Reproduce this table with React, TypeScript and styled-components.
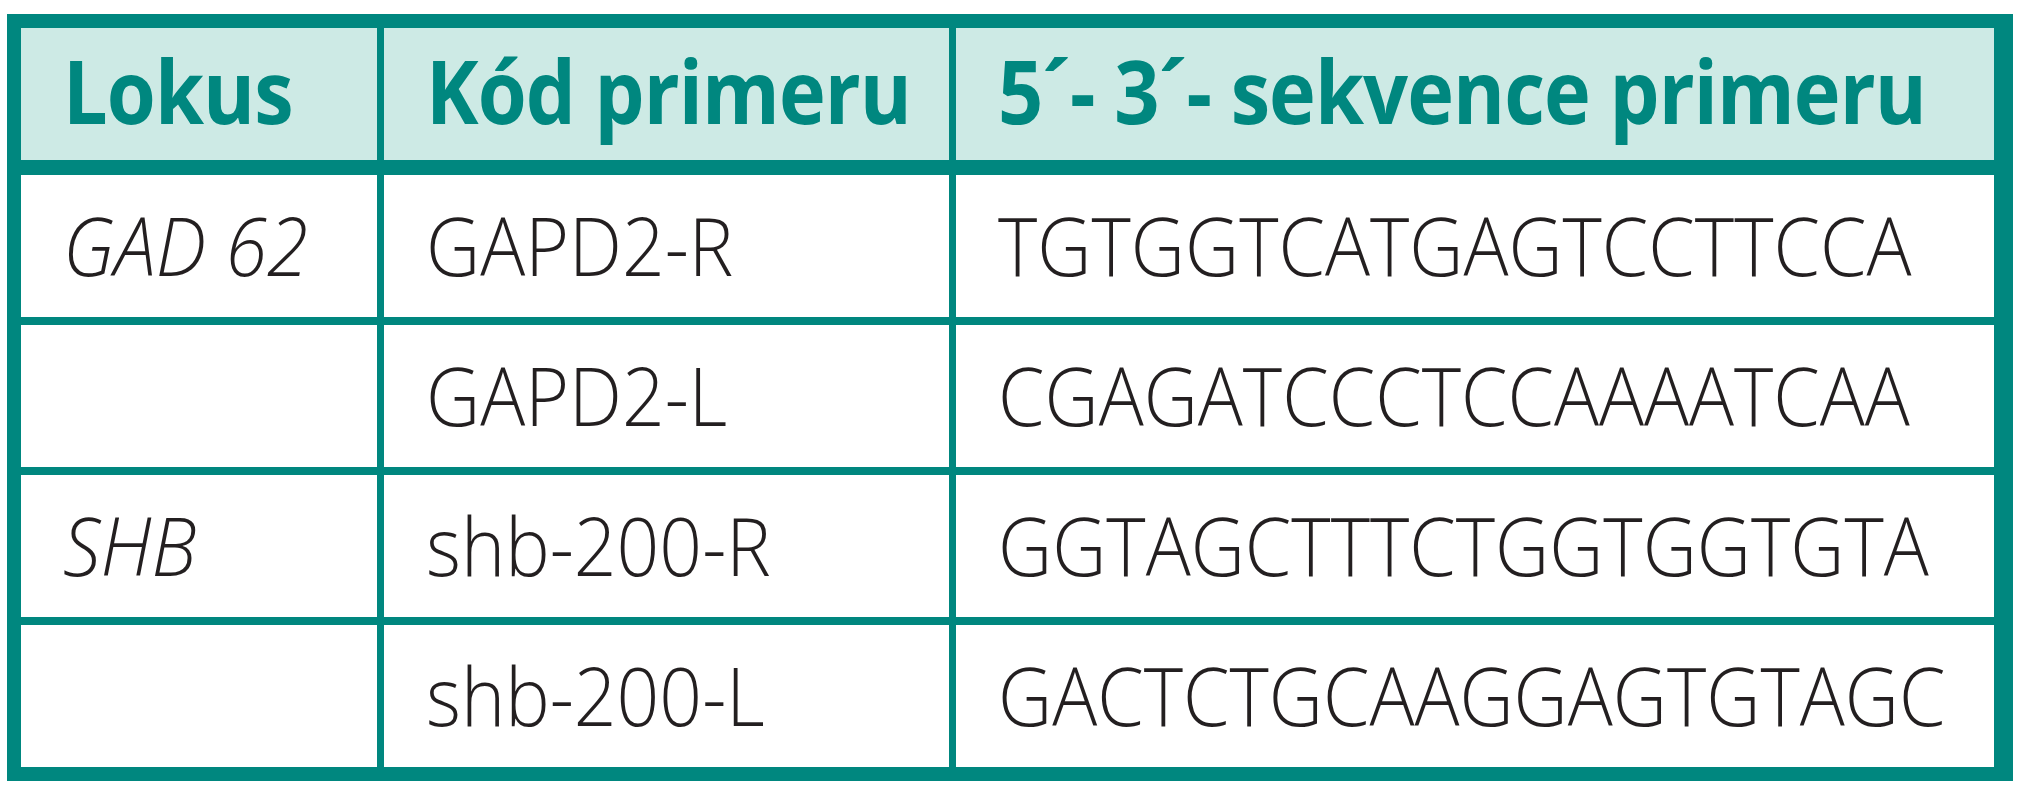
import styled, { createGlobalStyle } from 'styled-components';

const GlobalStyle = createGlobalStyle`
  html, body {
    margin: 0;
    padding: 0;
    background: #ffffff;
  }
  body {
    font-family: "Open Sans", "Liberation Sans", sans-serif;
  }
`;

const Page = styled.div`
  width: 2027px;
  height: 800px;
  padding: 14px 0 0 7px;
  box-sizing: border-box;
  overflow: hidden;
`;

const Table = styled.div`
  display: grid;
  grid-template-columns: 356px 565px 1038px;
  grid-template-rows: 139px repeat(4, 142px);
  column-gap: 7px;
  row-gap: 8px;
  width: 2006px;
  box-sizing: border-box;
  padding: 14px 18px 14px 14px;
  background: #00877f;
`;

const HeadCell = styled.div`
  display: flex;
  align-items: center;
  padding: 0 0 8px 42px;
  margin-bottom: 7px;
  background: #cdeae5;
  color: #00877f;
  font-family: "Open Sans", "Liberation Sans", sans-serif;
  font-weight: 700;
  font-size: 87px;
  letter-spacing: -1px;
  white-space: nowrap;
  overflow: hidden;
`;

const Cell = styled.div<{ $italic?: boolean }>`
  display: flex;
  align-items: center;
  padding: 0 0 4px 42px;
  background: #ffffff;
  color: #231f20;
  font-family: "Open Sans", "Liberation Sans", sans-serif;
  font-weight: 300;
  font-style: ${(p) => (p.$italic ? 'italic' : 'normal')};
  font-size: 81px;
  white-space: nowrap;
  overflow: hidden;
`;

/* Myriad-like narrow letters: squeeze the regular Open Sans a little */
const Narrow = styled.span<{ $scale: number }>`
  display: inline-block;
  transform: scaleX(${(p) => p.$scale});
  transform-origin: left center;
`;

const rows = [
  { locus: 'GAD 62', code: 'GAPD2-R', seq: 'TGTGGTCATGAGTCCTTCCA' },
  { locus: '', code: 'GAPD2-L', seq: 'CGAGATCCCTCCAAAATCAA' },
  { locus: 'SHB', code: 'shb-200-R', seq: 'GGTAGCTTTCTGGTGGTGTA' },
  { locus: '', code: 'shb-200-L', seq: 'GACTCTGCAAGGAGTGTAGC' },
];

const HEAD_SCALE = 0.91;
const BODY_SCALE = 0.925;

export default function App() {
  return (
    <>
      <GlobalStyle />
      <Page>
        <Table>
          <HeadCell><Narrow $scale={HEAD_SCALE}>Lokus</Narrow></HeadCell>
          <HeadCell><Narrow $scale={HEAD_SCALE}>Kód primeru</Narrow></HeadCell>
          <HeadCell><Narrow $scale={HEAD_SCALE}>5´- 3´- sekvence primeru</Narrow></HeadCell>
          {rows.map((r) => (
            <>
              <Cell $italic><Narrow $scale={BODY_SCALE}>{r.locus}</Narrow></Cell>
              <Cell><Narrow $scale={BODY_SCALE}>{r.code}</Narrow></Cell>
              <Cell><Narrow $scale={BODY_SCALE}>{r.seq}</Narrow></Cell>
            </>
          ))}
        </Table>
      </Page>
    </>
  );
}
